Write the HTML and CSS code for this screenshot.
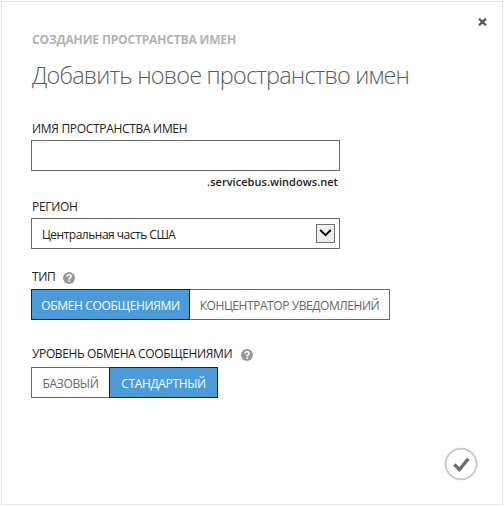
FILE: index.html
```html
<!DOCTYPE html>
<html lang="ru">
<head>
<meta charset="utf-8">
<title>Создание пространства имен</title>
<link rel="stylesheet" href="styles.css">
</head>
<body>
<main class="dialog">
  <button class="close" aria-label="Закрыть">
    <svg width="9" height="8" viewBox="0 0 9 8"><path d="M1 .7 8 7.3M8 .7 1 7.3"/></svg>
  </button>
  <p class="eyebrow">СОЗДАНИЕ ПРОСТРАНСТВА ИМЕН</p>
  <h1 class="title">Добавить новое пространство имен</h1>

  <section class="field field-name">
    <div class="label"><span>ИМЯ ПРОСТРАНСТВА ИМЕН</span></div>
    <div class="input"></div>
    <div class="suffix"><span>.servicebus.windows.net</span></div>
  </section>

  <section class="field field-region">
    <div class="label"><span>РЕГИОН</span></div>
    <div class="input select">
      <span class="value">Центральная часть США</span>
      <span class="arrow"><svg width="13" height="9" viewBox="0 0 13 9"><path d="M1.2 1 6.5 6.2 11.8 1"/></svg></span>
    </div>
  </section>

  <section class="field field-type">
    <div class="label"><span>ТИП</span>
      <svg class="help" width="12" height="12" viewBox="0 0 12 12"><circle cx="6" cy="6" r="6"/><path d="M4.1 4.6C4.1 2.2 8 2.2 8 4.4 8 5.8 6.1 5.8 6.1 7.4M6.1 8.4V10"/></svg>
    </div>
    <div class="segments">
      <div class="segment on w-msg"><span>ОБМЕН СООБЩЕНИЯМИ</span></div>
      <div class="segment w-hub"><span>КОНЦЕНТРАТОР УВЕДОМЛЕНИЙ</span></div>
    </div>
  </section>

  <section class="field field-tier">
    <div class="label"><span>УРОВЕНЬ ОБМЕНА СООБЩЕНИЯМИ</span>
      <svg class="help" width="12" height="12" viewBox="0 0 12 12"><circle cx="6" cy="6" r="6"/><path d="M4.1 4.6C4.1 2.2 8 2.2 8 4.4 8 5.8 6.1 5.8 6.1 7.4M6.1 8.4V10"/></svg>
    </div>
    <div class="segments">
      <div class="segment w-basic"><span>БАЗОВЫЙ</span></div>
      <div class="segment on w-std"><span>СТАНДАРТНЫЙ</span></div>
    </div>
  </section>

  <button class="confirm" aria-label="Готово">
    <svg width="34" height="34" viewBox="0 0 34 34"><circle cx="17" cy="17" r="15.4"/><path d="M10.3 17.5 15.5 22.6 24.3 11.8"/></svg>
  </button>
</main>
</body>
</html>
```
FILE: styles.css
```css
* { box-sizing: border-box; }

body {
  margin: 0;
  padding: 1px;
  width: 504px;
  height: 506px;
  background: #fff;
  font-family: "Open Sans", "Noto Sans", sans-serif;
  font-size: 12px;
  color: #222;
  white-space: nowrap;
}

.dialog {
  position: relative;
  width: 502px;
  height: 504px;
  border: 1px solid #e5e5e5;
  padding: 0 29px;
  display: flex;
  flex-direction: column;
}

button {
  position: absolute;
  padding: 0;
  border: 0;
  background: none;
}

button svg, .help, .arrow svg { display: block; fill: none; }

.close { top: 16px; right: 15px; }
.close path { stroke: #555; stroke-width: 2.3; }

.confirm { right: 24px; bottom: 23px; }
.confirm circle { stroke: #c6c6c6; stroke-width: 1.8; }
.confirm path { stroke: #6d6d6d; stroke-width: 3.4; }

.eyebrow {
  margin: 29px 0 0 1px;
  height: 18px;
  line-height: 18px;
  font-weight: 700;
  color: #b0b2b4;
  letter-spacing: -0.16px;
}

.title {
  margin: 8px 0 1px 1px;
  height: 36px;
  line-height: 36px;
  font-size: 23.5px;
  font-weight: 300;
  color: #5c5c5c;
  letter-spacing: -0.81px;
}

.label {
  display: flex;
  align-items: center;
  height: 20px;
  padding-left: 1px;
  line-height: 20px;
  letter-spacing: -0.31px;
}

.field-name { margin-top: 24px; height: 80px; }
.field-region { height: 71px; }
.field-type { height: 78px; }

.field-name .label { height: 22px; }
.field-region .label { padding-bottom: 2px; }
.field-type .label { padding-bottom: 4px; }
.field-tier .label { padding-bottom: 6px; letter-spacing: -0.37px; }

.input {
  width: 309px;
  height: 31px;
  border: 1px solid #6b6b6b;
}

.suffix {
  width: 307px;
  height: 22px;
  line-height: 22px;
  font-size: 11px;
  font-weight: 600;
  letter-spacing: 0.04px;
  text-align: right;
}

.select {
  display: flex;
  align-items: center;
  justify-content: space-between;
  padding: 1px 4px 0 10px;
}

.value { letter-spacing: -0.5px; }

.arrow {
  width: 19px;
  height: 19px;
  margin-bottom: 1px;
  border: 1px solid #707070;
  background: #eee;
  display: flex;
  align-items: center;
  justify-content: center;
}
.arrow path { stroke: #000; stroke-width: 2; }

.help { margin: 2px 0 0 7px; }
.field-tier .help { margin-left: 9px; }
.help circle { fill: #999; }
.help path { stroke: #fff; stroke-width: 1.6; }

.segments { display: flex; }

.segment {
  height: 31px;
  padding-top: 2px;
  border: 1px solid #6b6b6b;
  display: flex;
  align-items: center;
  justify-content: center;
  color: #666;
  letter-spacing: -0.34px;
}
.segment + .segment { margin-left: -1px; }
.segment.on {
  position: relative;
  border-color: #17222c;
  background: #4a9bd9;
  color: #fff;
}

.w-msg { width: 159px; }
.w-hub { width: 201px; letter-spacing: -0.43px; }
.w-basic { width: 79px; }
.w-std { width: 109px; }
```
